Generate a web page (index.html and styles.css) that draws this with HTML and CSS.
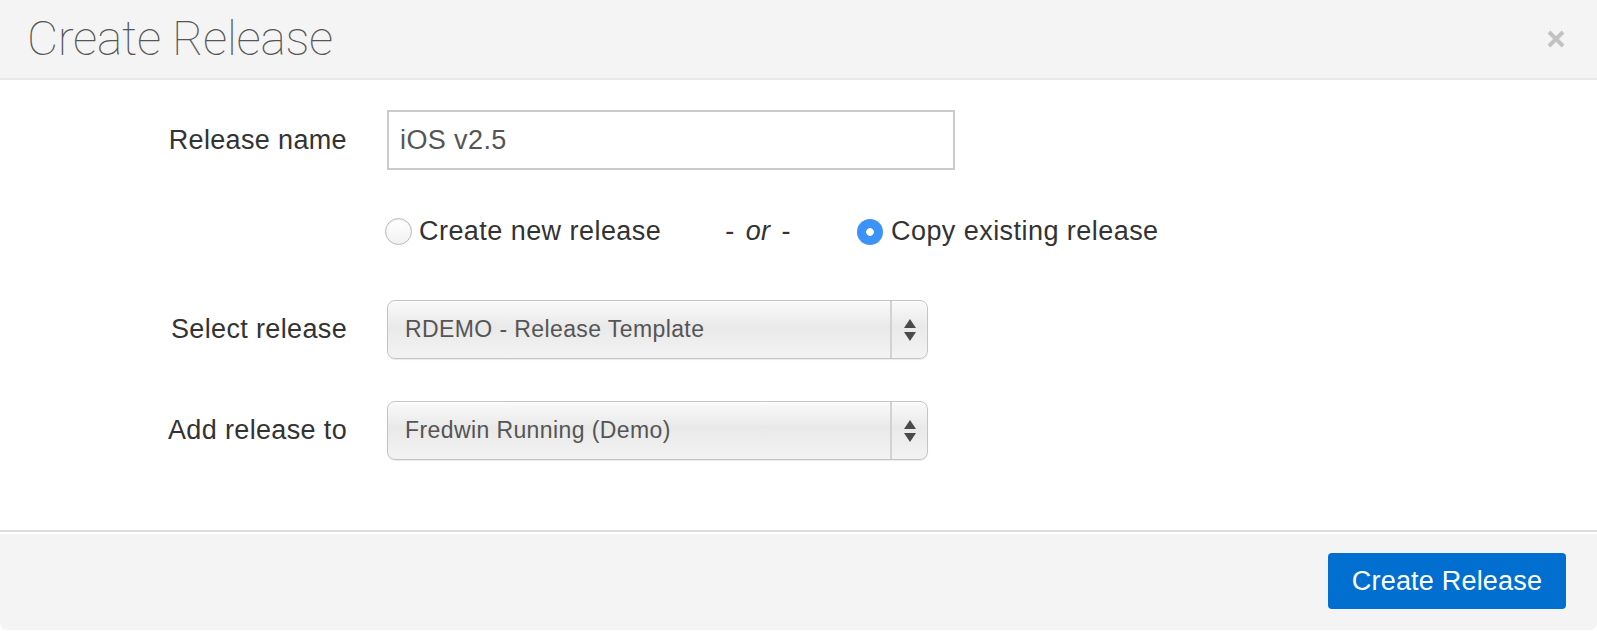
FILE: index.html
```html
<!DOCTYPE html>
<html>
<head>
<meta charset="utf-8">
<link rel="stylesheet" href="styles.css">
</head>
<body>
<div class="modal">
  <div class="modal-header">
    <h1 class="title">Create Release</h1>
    <span class="close"><svg width="18" height="18" viewBox="0 0 18 18"><path d="M2 2 L16 16 M16 2 L2 16" stroke="#c2c2c2" stroke-width="4" stroke-linecap="butt"/></svg></span>
  </div>
  <div class="modal-body">
    <div class="row row-name">
      <label class="label">Release name</label>
      <div class="input">iOS v2.5</div>
    </div>
    <div class="row row-radio">
      <span class="label"></span>
      <div class="radios">
        <span class="radio-opt"><span class="radio"></span>Create new release</span>
        <span class="or">- <i>or</i> -</span>
        <span class="radio-opt"><span class="radio checked"></span>Copy existing release</span>
      </div>
    </div>
    <div class="row row-sel1">
      <label class="label">Select release</label>
      <div class="select"><span class="sel-text">RDEMO - Release Template</span><span class="sel-arrows"><span class="up"></span><span class="down"></span></span></div>
    </div>
    <div class="row row-sel2">
      <label class="label">Add release to</label>
      <div class="select"><span class="sel-text">Fredwin Running (Demo)</span><span class="sel-arrows"><span class="up"></span><span class="down"></span></span></div>
    </div>
  </div>
  <div class="modal-footer">
    <button class="btn">Create Release</button>
  </div>
</div>
</body>
</html>
```
FILE: styles.css
```css
* { box-sizing: border-box; }
html, body { margin: 0; padding: 0; background: #fff; }
body { font-family: "Liberation Sans", Arial, sans-serif; color: #333; }

.modal {
  width: 1597px;
  height: 630px;
  display: flex;
  flex-direction: column;
  border-radius: 0 0 7px 7px;
  overflow: hidden;
}

.modal-header {
  height: 80px;
  flex: none;
  background: #f4f4f4;
  border-bottom: 2px solid #e9e9e9;
  display: flex;
  align-items: center;
  justify-content: space-between;
  padding: 0 32px 0 27px;
}
.title {
  margin: 0;
  font-family: "Roboto", "Liberation Sans", sans-serif;
  font-weight: 100;
  font-size: 48px;
  letter-spacing: -0.3px;
  color: #555;
  line-height: 1;
}
.close { display: flex; margin-top: -1px; }

.modal-body {
  flex: 1;
  padding-top: 30px;
}
.row {
  display: grid;
  grid-template-columns: 347px 1fr;
  column-gap: 40px;
  align-items: center;
}
.label {
  text-align: right;
  font-size: 27px;
  letter-spacing: 0.35px;
  color: #333;
}
.input {
  width: 568px;
  height: 60px;
  border: 2px solid #cbcbcb;
  display: flex;
  align-items: center;
  padding-left: 11px;
  font-size: 27px;
  letter-spacing: 0.4px;
  color: #555;
}

.row-radio { margin-top: 46px; }
.radios {
  display: flex;
  align-items: center;
  font-size: 27px;
  letter-spacing: 0.45px;
  color: #333;
  margin-left: -2px;
}
.radio-opt { display: flex; align-items: center; }
.radio {
  width: 27px;
  height: 27px;
  border-radius: 50%;
  border: 1px solid #b9b9b9;
  background: linear-gradient(#fff, #f2f2f2);
  margin-right: 7px;
  box-shadow: inset 0 1px 2px rgba(0,0,0,0.08);
  flex: none;
}
.radio.checked {
  width: 26px;
  height: 26px;
  border: none;
  background: #3b93f7 radial-gradient(circle, #fff 0 3.5px, transparent 4.2px);
  box-shadow: none;
  margin-right: 8px;
}
.or { margin: 0 66px 0 64px; color: #333; }
.or i { font-style: italic; padding: 0 3px; }

.row-sel1 { margin-top: 53px; }
.row-sel2 { margin-top: 42px; }
.select {
  width: 541px;
  height: 59px;
  border: 1px solid #c4c4c4;
  border-radius: 8px;
  background: linear-gradient(#fafafa 0%, #e9e9e9 45%, #f3f3f3 100%);
  box-shadow: inset 0 1px 0 #fff, 0 1px 1px rgba(0,0,0,0.08);
  display: flex;
  align-items: center;
  font-size: 23px;
  letter-spacing: 0.4px;
  color: #555;
}
.sel-text { flex: 1; padding-left: 17px; }
.sel-arrows {
  width: 37px;
  align-self: stretch;
  border-left: 2px solid #d2d2d2;
  display: flex;
  flex-direction: column;
  align-items: center;
  justify-content: center;
  gap: 4px;
}
.up, .down { width: 0; height: 0; border-left: 6px solid transparent; border-right: 6px solid transparent; }
.up { border-bottom: 9px solid #4a4a4a; }
.down { border-top: 9px solid #4a4a4a; }

.modal-footer {
  height: 100px;
  flex: none;
  background: #f4f4f4;
  border-top: 2px solid #dcdcdc;
  box-shadow: inset 0 2px 0 #fff;
  display: flex;
  justify-content: flex-end;
  align-items: flex-start;
  padding: 21px 31px 0 0;
}
.btn {
  width: 238px;
  height: 56px;
  background: #016fcf;
  color: #fff;
  border: none;
  border-radius: 4px;
  font-family: "Liberation Sans", Arial, sans-serif;
  font-size: 27px;
  letter-spacing: 0.2px;
  padding: 0;
}
```
